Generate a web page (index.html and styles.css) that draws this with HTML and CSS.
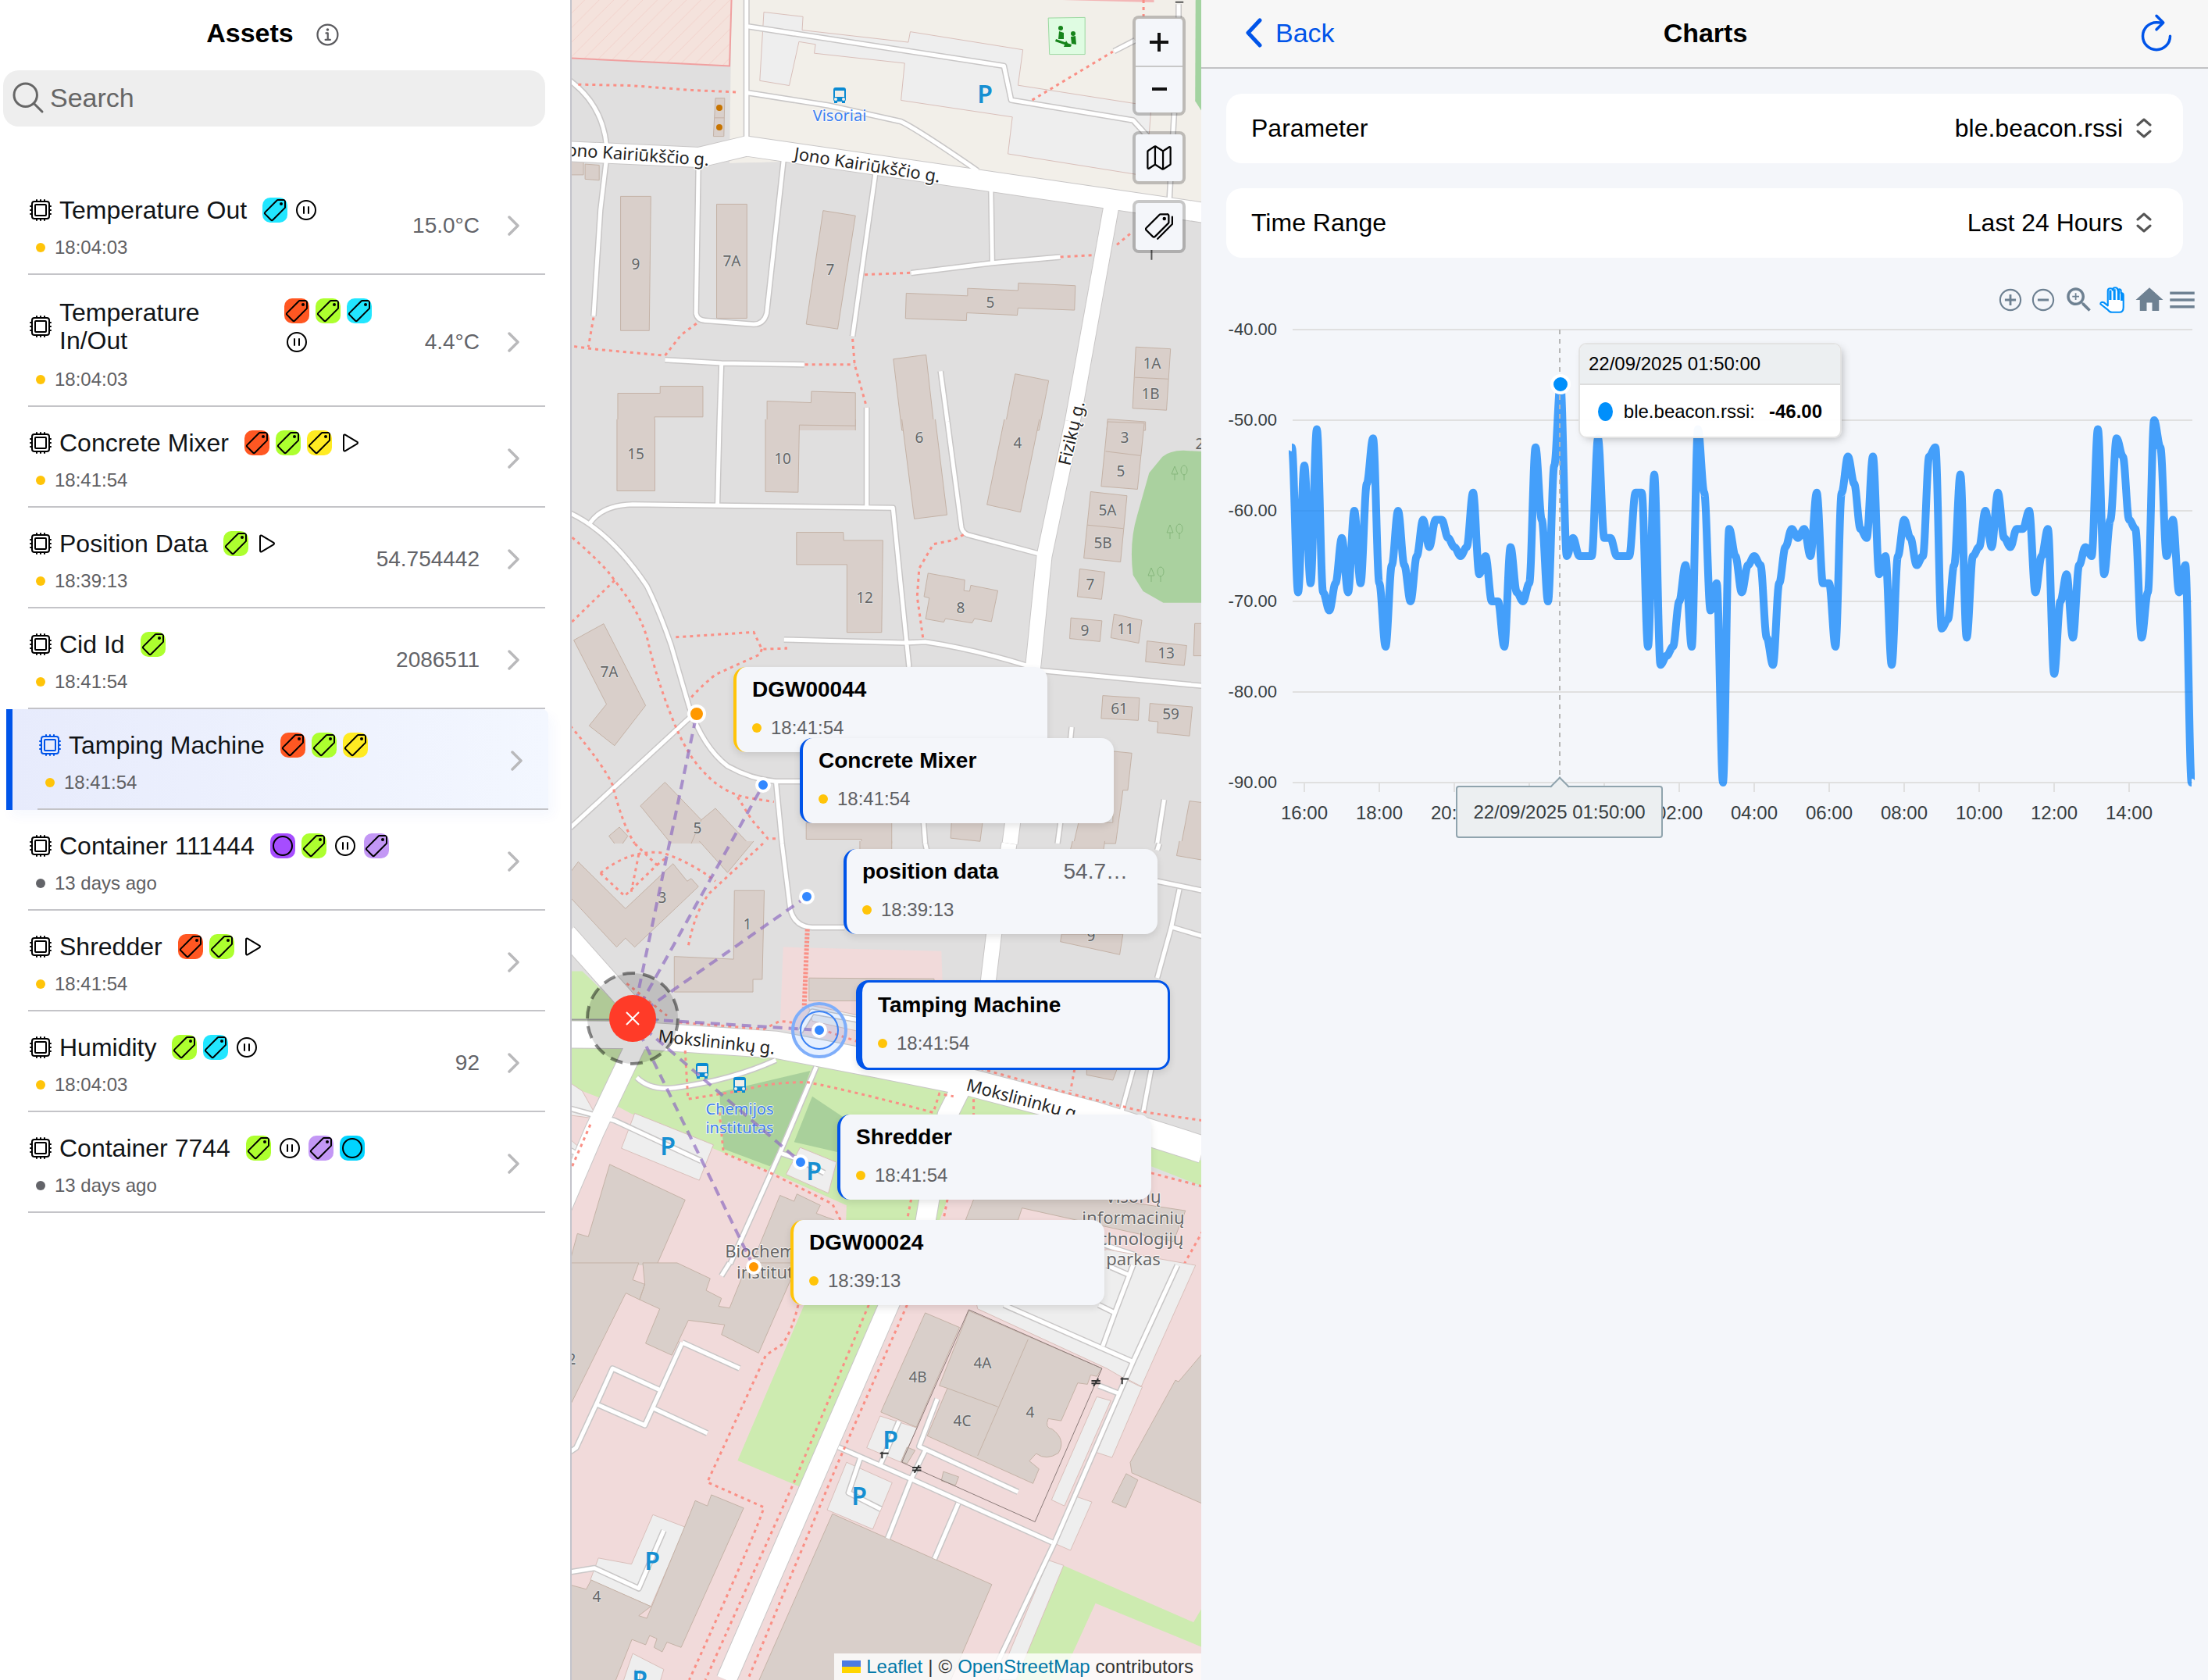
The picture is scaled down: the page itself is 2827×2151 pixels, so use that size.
FILE: index.html
```html
<!DOCTYPE html>
<html lang="en">
<head>
<meta charset="utf-8">
<title>Assets</title>
<meta name="viewport" content="width=device-width, initial-scale=1">
<link rel="stylesheet" href="styles.css">
</head>
<body>
<svg class="sprite" aria-hidden="true">
  <symbol id="i-chip" viewBox="0 0 512 512"><g fill="none" stroke="currentColor" stroke-width="32" stroke-linejoin="round" stroke-linecap="round"><rect x="80" y="80" width="352" height="352" rx="48"/><rect x="144" y="144" width="224" height="224" rx="16"/><path d="M256 80V48M336 80V48M176 80V48M256 464v-32M336 464v-32M176 464v-32M432 256h32M432 336h32M432 176h32M48 256h32M48 336h32M48 176h32"/></g></symbol>
  <symbol id="i-tag" viewBox="0 0 512 512"><path fill="none" stroke="currentColor" stroke-width="32" stroke-linejoin="round" d="M435.25 48h-122.9a14.46 14.46 0 00-10.2 4.2L56.45 297.9a28.85 28.85 0 000 40.7l117 117a28.85 28.85 0 0040.7 0L459.75 210a14.46 14.46 0 004.2-10.2v-123a28.66 28.66 0 00-28.7-28.8z"/><circle cx="384" cy="128" r="32" fill="currentColor"/></symbol>
  <symbol id="i-tags" viewBox="0 0 512 512"><g fill="none" stroke="currentColor" stroke-width="32" stroke-linejoin="round" stroke-linecap="round"><path d="M403.29 32H280.36a14.46 14.46 0 00-10.2 4.2L24.4 281.9a28.85 28.85 0 000 40.7l117 117a28.86 28.86 0 0040.71 0L427.8 194a14.46 14.46 0 004.2-10.2v-123A28.66 28.66 0 00403.29 32z"/><path d="M230 480l262-262a13.81 13.81 0 004-10V80"/></g><circle cx="352" cy="112" r="32" fill="currentColor"/></symbol>
  <symbol id="i-map" viewBox="0 0 512 512"><path fill="none" stroke="currentColor" stroke-width="32" stroke-linejoin="round" stroke-linecap="round" d="M313.27 124.64L198.73 51.36a32 32 0 00-29.28.35L56.51 127.49A16 16 0 0048 141.63v295.8a16 16 0 0023.49 14.14l97.82-63.79a32 32 0 0129.5-.24l111.86 73a32 32 0 0029.27-.11l115.43-75.94a16 16 0 008.63-14.2V74.57a16 16 0 00-23.49-14.14l-98 63.86a32 32 0 01-29.24.35zM328 128v336M184 48v336"/></symbol>
  <symbol id="i-pause" viewBox="0 0 512 512"><g fill="none" stroke="currentColor" stroke-width="32" stroke-linecap="round"><circle cx="256" cy="256" r="192"/><path d="M208 192v128M304 192v128"/></g></symbol>
  <symbol id="i-play" viewBox="0 0 512 512"><path fill="none" stroke="currentColor" stroke-width="32" d="M112 111v290c0 17.44 17 28.52 31 20.16l247.9-148.37c12.12-7.25 12.12-26.33 0-33.58L143 90.84c-14-8.36-31 2.72-31 20.16z"/></symbol>
  <symbol id="i-ring" viewBox="0 0 512 512"><circle cx="256" cy="256" r="192" fill="none" stroke="currentColor" stroke-width="32"/></symbol>
  <symbol id="i-info" viewBox="0 0 512 512"><g fill="none" stroke="currentColor" stroke-width="32" stroke-linecap="round" stroke-linejoin="round"><circle cx="248" cy="248" r="184"/><path d="M220 220h32v116M208 340h88"/></g><circle cx="248" cy="156" r="26" fill="currentColor"/></symbol>
  <symbol id="i-search" viewBox="0 0 512 512"><g fill="none" stroke="currentColor" stroke-width="32" stroke-linecap="round"><circle cx="221" cy="221" r="157"/><path d="M338.29 338.29L448 448"/></g></symbol>
  <symbol id="i-refresh" viewBox="0 0 512 512"><g fill="none" stroke="currentColor" stroke-width="32" stroke-linecap="round" stroke-linejoin="round"><path d="M320 146s24.36-12-64-12a160 160 0 10160 160"/><path d="M256 58l80 80-80 80"/></g></symbol>
  <symbol id="i-forward" viewBox="0 0 16 28"><path fill="none" stroke="currentColor" stroke-width="3.500" stroke-linecap="round" stroke-linejoin="round" d="M2 3l11 11L2 25"/></symbol>
  <symbol id="i-back" viewBox="0 0 22 38"><path fill="none" stroke="currentColor" stroke-width="5" stroke-linecap="round" stroke-linejoin="round" d="M19 3L4 19l15 16"/></symbol>
  <symbol id="i-expand" viewBox="0 0 20 26"><path fill="none" stroke="currentColor" stroke-width="3" stroke-linecap="round" stroke-linejoin="round" d="M2 9l8-7 8 7M2 17l8 7 8-7"/></symbol>
</svg>

<div class="app">
  <aside class="sidebar">
    <header class="sidebar-head">
      <h1 class="title">Assets</h1>
      <button class="icon-btn info-btn" type="button" aria-label="Information"><svg class="info-icon"><use href="#i-info"/></svg></button>
    </header>
    <label class="search">
      <svg class="search-icon"><use href="#i-search"/></svg>
      <input class="search-input" type="search" placeholder="Search" aria-label="Search">
    </label>
    <ul class="assets">
      <li><a class="asset" href="#">
        <span class="asset-main"><span class="asset-line"><svg class="chip"><use href="#i-chip"/></svg><span class="asset-name">Temperature Out</span><span class="badges"><svg class="badge cyan"><use href="#i-tag"/></svg><svg class="badge"><use href="#i-pause"/></svg></span></span>
        <span class="stamp"><i class="dot"></i>18:04:03</span></span>
        <span class="asset-value">15.0°C</span><svg class="forward"><use href="#i-forward"/></svg></a></li>
      <li><a class="asset" href="#">
        <span class="asset-main"><span class="asset-line"><svg class="chip"><use href="#i-chip"/></svg><span class="asset-name">Temperature In/Out</span><span class="badges"><svg class="badge red"><use href="#i-tag"/></svg><svg class="badge lime"><use href="#i-tag"/></svg><svg class="badge cyan"><use href="#i-tag"/></svg><svg class="badge"><use href="#i-pause"/></svg></span></span>
        <span class="stamp"><i class="dot"></i>18:04:03</span></span>
        <span class="asset-value">4.4°C</span><svg class="forward"><use href="#i-forward"/></svg></a></li>
      <li><a class="asset" href="#">
        <span class="asset-main"><span class="asset-line"><svg class="chip"><use href="#i-chip"/></svg><span class="asset-name">Concrete Mixer</span><span class="badges"><svg class="badge red"><use href="#i-tag"/></svg><svg class="badge lime"><use href="#i-tag"/></svg><svg class="badge yellow"><use href="#i-tag"/></svg><svg class="badge"><use href="#i-play"/></svg></span></span>
        <span class="stamp"><i class="dot"></i>18:41:54</span></span>
        <svg class="forward"><use href="#i-forward"/></svg></a></li>
      <li><a class="asset" href="#">
        <span class="asset-main"><span class="asset-line"><svg class="chip"><use href="#i-chip"/></svg><span class="asset-name">Position Data</span><span class="badges"><svg class="badge lime"><use href="#i-tag"/></svg><svg class="badge"><use href="#i-play"/></svg></span></span>
        <span class="stamp"><i class="dot"></i>18:39:13</span></span>
        <span class="asset-value">54.754442</span><svg class="forward"><use href="#i-forward"/></svg></a></li>
      <li><a class="asset" href="#">
        <span class="asset-main"><span class="asset-line"><svg class="chip"><use href="#i-chip"/></svg><span class="asset-name">Cid Id</span><span class="badges"><svg class="badge lime"><use href="#i-tag"/></svg></span></span>
        <span class="stamp"><i class="dot"></i>18:41:54</span></span>
        <span class="asset-value">2086511</span><svg class="forward"><use href="#i-forward"/></svg></a></li>
      <li><a class="asset selected" href="#" aria-current="true">
        <span class="asset-main"><span class="asset-line"><svg class="chip"><use href="#i-chip"/></svg><span class="asset-name">Tamping Machine</span><span class="badges"><svg class="badge red"><use href="#i-tag"/></svg><svg class="badge lime"><use href="#i-tag"/></svg><svg class="badge yellow"><use href="#i-tag"/></svg></span></span>
        <span class="stamp"><i class="dot"></i>18:41:54</span></span>
        <svg class="forward"><use href="#i-forward"/></svg></a></li>
      <li><a class="asset" href="#">
        <span class="asset-main"><span class="asset-line"><svg class="chip"><use href="#i-chip"/></svg><span class="asset-name">Container 111444</span><span class="badges"><svg class="badge purple"><use href="#i-ring"/></svg><svg class="badge lime"><use href="#i-tag"/></svg><svg class="badge"><use href="#i-pause"/></svg><svg class="badge lilac"><use href="#i-tag"/></svg></span></span>
        <span class="stamp"><i class="dot stale"></i>13 days ago</span></span>
        <svg class="forward"><use href="#i-forward"/></svg></a></li>
      <li><a class="asset" href="#">
        <span class="asset-main"><span class="asset-line"><svg class="chip"><use href="#i-chip"/></svg><span class="asset-name">Shredder</span><span class="badges"><svg class="badge red"><use href="#i-tag"/></svg><svg class="badge lime"><use href="#i-tag"/></svg><svg class="badge"><use href="#i-play"/></svg></span></span>
        <span class="stamp"><i class="dot"></i>18:41:54</span></span>
        <svg class="forward"><use href="#i-forward"/></svg></a></li>
      <li><a class="asset" href="#">
        <span class="asset-main"><span class="asset-line"><svg class="chip"><use href="#i-chip"/></svg><span class="asset-name">Humidity</span><span class="badges"><svg class="badge lime"><use href="#i-tag"/></svg><svg class="badge cyan"><use href="#i-tag"/></svg><svg class="badge"><use href="#i-pause"/></svg></span></span>
        <span class="stamp"><i class="dot"></i>18:04:03</span></span>
        <span class="asset-value">92</span><svg class="forward"><use href="#i-forward"/></svg></a></li>
      <li><a class="asset" href="#">
        <span class="asset-main"><span class="asset-line"><svg class="chip"><use href="#i-chip"/></svg><span class="asset-name">Container 7744</span><span class="badges"><svg class="badge lime"><use href="#i-tag"/></svg><svg class="badge"><use href="#i-pause"/></svg><svg class="badge lilac"><use href="#i-tag"/></svg><svg class="badge sky"><use href="#i-ring"/></svg></span></span>
        <span class="stamp"><i class="dot stale"></i>13 days ago</span></span>
        <svg class="forward"><use href="#i-forward"/></svg></a></li>
    </ul>
  </aside>

  <main class="map">
    <svg class="map-canvas" viewBox="732 0 806 2151" preserveAspectRatio="xMinYMin slice" role="img" aria-label="Street map">
      <defs>
        <pattern id="hatch" width="36" height="54" patternUnits="userSpaceOnUse"><path d="M-4 60L40 -6M-22 33L14 -21M14 87L50 33" stroke="#f0b9b4" stroke-width="1" fill="none"/></pattern>
        <g id="bus"><rect x="-8" y="-10" width="16" height="18" rx="3" fill="#0a8ad2"/><rect x="-6" y="-6" width="12" height="8" fill="#f2efe9"/><circle cx="-5" cy="5" r="2" fill="#f2efe9"/><circle cx="5" cy="5" r="2" fill="#f2efe9"/><path d="M-7 7h4v3h-4zM3 7h4v3h-4z" fill="#0a8ad2"/></g>
        <g id="trees" fill="none" stroke="#86b77c" stroke-width="1"><path d="M-6 10V2M6 10V2M-6 -8l4 10h-8z"/><ellipse cx="6" cy="-3" rx="4" ry="6"/></g>
      </defs>
      <rect x="732" width="806" height="2151" fill="#e0dfdf"/>

      <!-- tile row 1 -->
      <g transform="translate(730 0) scale(.5166 .3444)">
        <path class="cream" d="M400 0H1568V830L1320 787L530 602L395 607Z"/>
        <path class="res-strip" d="M0 215H395V607L530 602L1320 765L1568 815V1568H0Z"/>
        <path fill="#f4e2dc" d="M0 0H400L395 245L0 215Z"/><path fill="url(#hatch)" stroke="#f0a0a0" stroke-width="2" d="M-10 -10H400L395 245L-10 215Z"/>
        <path fill="#f3b6b6" d="M1220 0H1447V9L1220 0Z"/>
        <path fill="#a3d3a0" d="M1550 0H1568V420L1549 375Z"/>
        <path class="parking" d="M480 45L577 62L575 112L838 157L843 118L1122 185L1110 317L1400 385L1440 395L1435 500L1410 650L1085 572L1096 435L820 373L829 235L605 198L608 165L567 155L543 318L470 300Z"/>
        <path fill="#dffce2" stroke="#9bd8a0" stroke-width="1" d="M1185 67L1276 65V202H1188Z"/>
        <path class="building" d="M125 730H200L196 1229H125ZM363 759H438V1183H363ZM627 783L707 802L663 1223L585 1205ZM833 1090L985 1100V1072L1110 1080L1111 1052L1252 1062L1250 1153L1110 1145L1108 1172L983 1163L982 1192L831 1184ZM360 365H383L381 507H355ZM358 438H382M-9 592L33 594V650H-9ZM37 610L72 614V670L37 666ZM1402 1290L1488 1297L1478 1525L1394 1518ZM1400 1403L1482 1409M801 1335L882 1319L903 1600H822ZM1103 1390L1186 1415L1162 1600H1076ZM1332 1558L1426 1568V1600H1330Z"/>
        <path class="building" d="M118 1600V1462H223V1436H329V1550H209V1600M488 1600V1491L597 1497L598 1455L707 1460V1600"/>
        <path id="t1minor" class="w-minor" d="M437 -9V520M440 98L1075 245L1093 372L1395 447L1430 505M440 345L640 392L820 452Q860 480 1010 635M0 300Q80 390 90 540M90 590L75 780L58 1175M318 600L312 1165Q315 1190 335 1192L455 1206Q480 1205 487 1165L530 580M757 640L700 1250M1043 695L1046 975M845 1015L1046 978L1215 955M235 1338L375 1350L580 1355M375 1350L370 1568M735 1515V1568M918 1380L935 1568M1497 420L1485 745M1508 15V65M1348 190L1400 150"/>
        <use href="#t1minor" class="casing"/>
        <path id="t1jono" class="w-jono" d="M0 563L320 585L437 543L1340 740L1568 790"/>
        <path id="t1fiz" class="w-fiz" d="M1345 735L1245 1568"/>
        <use href="#t1jono" class="casing big"/><use href="#t1fiz" class="casing mid"/>
        <use href="#t1minor" class="road"/><use href="#t1jono" class="road big"/><use href="#t1fiz" class="road mid"/>
        <path class="foot" d="M20 314L150 318L300 335L420 343M58 1180L45 1290M10 1288L60 1298L235 1322L275 1245L320 1195M730 1021L845 1014M1215 955L1300 948M1355 910L1395 860M700 1260L705 1355L735 1515M582 1355H705M1145 372L1345 192M1421 0V60"/>
        <path d="M1441 925V966M1500 8H1520" stroke="#555" stroke-width="2"/>
      </g>

      <!-- tile row 2 -->
      <g transform="translate(730 540) scale(.5166 .3444)">
        <path fill="#aad19f" d="M1580 112L1520 107Q1485 108 1468 130L1435 190L1405 350Q1385 450 1395 570L1420 630L1470 673H1580Z"/>
        <path class="building" d="M116 -9V257H210V-9M484 -9V260L565 262L568 12L707 15V-9M822 -9L853 361L934 346L905 -9M1076 -9L1033 308L1116 336L1163 -9"/>
        <path class="building" d="M1332 0L1423 5L1406 251L1316 240ZM1327 110L1414 126M1290 260L1380 275L1364 521L1273 507ZM1282 384L1371 397M561 411H677L678 441H775L772 783H686V531H561ZM887 563L978 588L976 628L990 630L993 608L1060 628L1044 743L1002 732L996 748L930 732L926 745L881 733L890 655L877 650ZM1263 547L1325 559L1317 660L1257 650ZM1241 729L1318 740L1313 817L1238 806ZM1348 715L1417 738L1409 823L1340 803ZM1430 815L1528 832L1522 906L1426 892ZM1548 750H1580V870H1545ZM1320 1018L1411 1027L1408 1110L1316 1103ZM1437 1047L1542 1060L1535 1168L1455 1156L1457 1115L1434 1112ZM83 751L187 1055L110 1204L47 1130L90 1050L9 812Z"/>
        <path class="building" d="M250 1568L174 1428L235 1340L325 1480L360 1437L442 1568M300 1568L325 1480M110 1568L96 1540L122 1507L143 1540L130 1568M1345 1225L1392 1232L1382 1370H1370L1352 1568H1248L1260 1490H1345ZM585 1491H797V1568H722V1552H585ZM945 1491H1022L1016 1560L943 1548ZM1515 1568L1525 1490L1535 1410L1580 1418V1568"/>
        <path id="t2minor" class="w-minor" d="M370 0L365 310M735 0V315M935 0L970 395Q973 412 985 420L1160 490M50 375Q80 310 155 307L800 320L840 912M0 340Q100 410 190 610Q220 700 250 830L295 1060Q330 1210 390 1280Q450 1330 510 1337H570M510 1337L525 1568M0 1510L300 1095M530 810L830 822L880 818Q1000 845 1135 908M1165 925L1568 982M1243 1135L1240 1180M1472 1405L1455 1568M876 1491L880 1568M1215 1491L1208 1568"/>
        <path id="t2fiz" class="w-fiz" d="M1245 0L1175 500L1148 900L1090 1568"/>
        <use href="#t2minor" class="casing"/><use href="#t2fiz" class="casing mid"/>
        <use href="#t2minor" class="road"/><use href="#t2fiz" class="road mid"/>
        <path class="foot" d="M5 430Q90 540 110 590Q180 720 195 830Q215 960 255 1110Q290 1240 330 1300Q370 1370 430 1395L505 1413M110 590L0 750M262 801L455 782L475 845L535 843V825M475 845L470 865L360 940Q320 990 300 1025M975 420L950 440L900 455L865 545L860 650L875 810M0 1130Q80 1270 105 1350Q130 1500 160 1568M415 1395L450 1480L490 1550H510"/>
      </g>

      <!-- tile row 3 -->
      <g transform="translate(730 1080) scale(.5166 .3444)">
        <path class="grass" d="M0 475H30L110 590V740H0Z"/>
        <path class="commercial" d="M528 385L920 400L928 740L740 760L520 690Z"/>
        <path class="grass" d="M0 760H290L510 800L1000 930L1568 1180V1275L1440 1200L1350 1568H0Z"/>
        <path class="commercial" d="M0 903L90 955L150 1003L380 1150L490 1215L685 1345L680 1568H0ZM935 1323L1440 1215L1568 1285V1580H870Z"/>
        <path class="wood" d="M370 925L595 845L530 1130L495 1200L380 1135ZM600 940L700 1040V1160L555 1110Z"/>
        <path class="parking" d="M160 1003L355 1120L320 1252L127 1133ZM570 1130L660 1185L640 1300L535 1230ZM0 890L30 920L60 1000L50 1020L0 1010ZM0 1100L30 1140L0 1230ZM590 600L720 640V700L600 660Z"/>
        <path class="building" d="M20 68L137 242L255 75L290 140L300 130L318 160L160 385L137 352L115 385L0 200V108ZM320 -9L390 108L455 -9M407 175H481L476 505H453V552H258V420L405 430ZM592 500L902 503V585H592ZM718 -9V22H797V-9M1245 -9L1240 22H1322L1325 -9M1510 -9L1503 45L1580 65V-9M1218 337H1370L1362 413L1215 365ZM1280 840H1355L1345 880L1280 860Z"/>
        <path class="building" d="M98 1193L285 1325L205 1600H-9L18 1450L45 1462ZM520 1308L555 1330L562 1303L620 1345L610 1375L655 1400L600 1600H440ZM1000 1323H1340L1525 1365L1495 1480L1120 1355L1110 1400H980Z"/>
        <path id="t3minor" class="w-minor" d="M525 0L545 240Q555 310 600 312H680M165 870Q200 920 260 908Q400 880 510 805M610 830L520 1150L395 1568M520 1150L560 1170M0 985L110 1030L325 1180M0 1140L25 1160M710 655L600 625L570 700M1455 140L1568 175M1510 170L1490 310L1455 500M1490 310L1568 345M1395 840L1365 1005M1440 840L1420 1000M1460 0L1455 25M880 0L884 25M560 1170L630 1225M1300 1480L1400 1530"/>
        <path id="t3mok" class="w-mok" d="M0 710L156 712L510 748L760 820L1000 892L1300 1010L1568 1138"/>
        <path id="t3side" class="w-side" d="M-9 335L160 620M165 740L60 1070L-20 1350M975 890L935 1010L890 1323L862 1568"/>
        <path id="t3fiz" class="w-fiz" d="M1088 0L1050 340L1010 840"/>
        <use href="#t3minor" class="casing"/><use href="#t3mok" class="casing huge"/><use href="#t3side" class="casing big"/><use href="#t3fiz" class="casing mid"/>
        <use href="#t3minor" class="road"/><use href="#t3mok" class="road huge"/><use href="#t3side" class="road big"/><use href="#t3fiz" class="road mid"/>
        <path class="foot" d="M478 0L345 185Q310 250 293 380M75 110Q150 20 230 35Q300 70 360 140M75 110L135 195L215 80L160 0M170 40L150 190M215 80L240 50M270 665L480 690L520 660L550 665M285 770L292 950L420 920Q500 885 590 888Q700 920 900 1000L915 930L950 940M370 1000L380 1150L490 1220L650 1340L670 1400M1000 950V1008M140 520L240 640M640 700L720 740M1000 830L1240 930L1430 1000L1568 1030M1250 840L1240 920M50 1045L5 1200M1440 1225L1568 1275M845 1323L835 1400M935 1323L925 1400M1568 1440L1520 1568"/>
        <path class="steps" d="M588 318L580 610"/>
        <path d="M0 655H220" stroke="#999" stroke-width="2"/>
      </g>

      <!-- tile row 4 -->
      <g transform="translate(730 1620) scale(.5166 .3386)">
        <path class="commercial" d="M0 0H1568V1568H0Z"/>
        <path class="grass" d="M565 0H800L765 150L570 838L415 738L580 150ZM1222 1135L1545 1350L1568 1290V1445L1302 1278L1215 1568H1105Z"/>
        <path class="parking" d="M1000 100L1330 -60L1550 0L1415 460L1375 430L1330 390L1010 165ZM1305 497L1340 512L1225 910L1193 887ZM1380 430L1418 460L1343 727L1305 708ZM1255 875L1293 895L1240 1078L1198 1050ZM1185 1115L1223 1135L1105 1568H1060ZM768 570L860 615L820 745L735 690ZM685 745L798 822L750 998L637 925ZM205 943L285 990L200 1290L50 1190L70 1107L152 1130ZM155 1468L232 1528L222 1580H130Z"/>
        <path class="building" d="M-9 -9H170L155 55L185 72L172 130L138 105L0 530H-9ZM180 -9H265L347 50L337 95L375 125L368 155L395 162L440 -9H560L545 60L467 332L375 262L383 225L293 208L252 340L187 295L222 165L172 130L185 72ZM350 868L430 918L275 1445L240 1425L228 1462L208 1445L215 1412L197 1400L187 1435L153 1415L110 1580H-9V1205L40 1225L52 1190L200 1290L170 1325L190 1335L297 940L310 890L340 910ZM650 940L1045 1207L940 1580H465ZM880 180L965 235L858 612L770 555ZM988 172L1318 390L1305 420L1290 415L1282 450L1258 445L1217 588L1185 580Q1175 615 1195 620Q1230 660 1210 710Q1180 740 1155 712L1138 740L1162 770L1147 825L885 645L935 465L915 455ZM1135 280L1010 720M935 465L1060 535M1580 310L1508 440L1500 435L1388 745L1392 785L1580 910ZM1378 788L1407 812L1377 917L1343 895ZM925 780L963 800L955 832L920 815ZM835 688L855 700L835 750L820 742Z"/>
        <path fill="none" stroke="#8a7a78" stroke-width="1" d="M988 168L822 745L1152 970L1318 390Z"/>
        <path id="t4minor" class="w-minor" d="M278 292L420 390M278 292L185 605L65 525L105 390L220 470M205 540L340 635M65 525L15 690L0 705M665 688L845 808L1195 1048M1060 1500L1200 1050L1395 365L1505 0M1395 365L1075 150M1320 305L1350 180L1395 0M1350 180L1310 150M1390 40L1330 0M1310 455L1360 485M910 505L865 685L1110 857M880 700L845 808L787 1033M962 900L903 1110M720 725L690 860L770 922M815 590L770 750M0 1160L60 1145L170 1222L232 1003M165 1568L168 1530M395 -9L375 40"/>
        <path id="t4side" class="w-side" d="M832 0L790 150L387 1568"/>
        <use href="#t4minor" class="casing"/><use href="#t4side" class="casing big"/>
        <use href="#t4minor" class="road"/><use href="#t4side" class="road big"/>
        <path class="foot" d="M565 150Q550 250 525 300L485 340L340 820L480 915Q470 980 295 1568M740 150L555 820L335 1568M835 150L660 760L440 1568"/>
        <path d="M1292 437H1314M1292 447H1314M1309 428L1297 457M848 765H870M848 775H870M865 756L853 785M1368 424V450M1364 430H1384M773 705V730M768 711H789" stroke="#333" stroke-width="2"/>
      </g>

      <g fill="#c77400"><circle cx="921" cy="138" r="4"/><circle cx="921" cy="163" r="4"/></g>
      <g fill="#16841b"><circle cx="1358" cy="36" r="3"/><path d="M1356 40l6 2v8h-7zM1352 50l20 7-1 3-20-7zM1365 52l5 8h-8z"/><circle cx="1374" cy="43" r="3"/><path d="M1371 47l6-1 1 11-6-1z"/></g>
      <use href="#trees" x="1510" y="605"/><use href="#trees" x="1504" y="680"/><use href="#trees" x="1480" y="735"/>
      <use href="#bus" x="1075" y="122"/><use href="#bus" x="899" y="1371"/><use href="#bus" x="947" y="1389"/>

      <g class="p-mark">
        <text x="1261" y="132">P</text><text x="855" y="1479">P</text><text x="1042" y="1511">P</text><text x="1140" y="1855">P</text><text x="1100" y="1927">P</text><text x="835" y="2010">P</text><text x="819" y="2162">P</text>
      </g>
      <g class="stop">
        <text x="1075" y="155">Visoriai</text><text x="947" y="1427">Chemijos</text><text x="947" y="1451">institutas</text>
      </g>
      <g class="house">
        <text x="814" y="345">9</text><text x="937" y="341">7A</text><text x="1063" y="352">7</text><text x="1268" y="394">5</text><text x="1475" y="472">1A</text><text x="1473" y="511">1B</text>
        <text x="814" y="588">15</text><text x="1002" y="594">10</text><text x="1177" y="567">6</text><text x="1303" y="574">4</text><text x="1440" y="567">3</text><text x="1435" y="610">5</text><text x="1418" y="660">5A</text><text x="1412" y="702">5B</text><text x="1107" y="772">12</text><text x="1230" y="785">8</text><text x="1396" y="755">7</text><text x="1389" y="814">9</text><text x="1441" y="812">11</text><text x="1493" y="843">13</text><text x="780" y="867">7A</text><text x="1433" y="914">61</text><text x="1499" y="921">59</text><text x="893" y="1067">5</text><text x="1536" y="575">2</text>
        <text x="848" y="1156">3</text><text x="957" y="1190">1</text><text x="1397" y="1205">9</text>
        <text x="1175" y="1770">4B</text><text x="1258" y="1752">4A</text><text x="1232" y="1826">4C</text><text x="1319" y="1815">4</text><text x="764" y="2051">4</text><text x="732" y="1747">2</text>
      </g>
      <g class="place">
        <text x="991" y="1610">Biochemijos</text><text x="991" y="1637">institutas</text>
        <text x="1451" y="1540">Visorių</text><text x="1451" y="1567">informacinių</text><text x="1451" y="1594">technologijų</text><text x="1451" y="1620">parkas</text>
      </g>
      <g class="street">
        <text transform="translate(719 199) rotate(4)">Jono Kairiūkščio g.</text>
        <text transform="translate(1016 204) rotate(9)">Jono Kairiūkščio g.</text>
        <text transform="translate(1370 597) rotate(-77)">Fizikų g.</text>
        <text transform="translate(842 1334) rotate(6)">Mokslininkų g.</text>
        <text transform="translate(1236 1396) rotate(15)">Mokslininkų g.</text>
      </g>

      <!-- gateway links and markers -->
      <circle cx="810" cy="1304" r="58" class="range"/>
      <path class="link" d="M810 1304L892 914M810 1304L977 1005M810 1304L1033 1148M810 1304L1049 1319M810 1304L1025 1488M810 1304L965 1622"/>
      <circle cx="810" cy="1304" r="30" fill="#ff3b28"/>
      <path d="M802 1296l16 16m0-16l-16 16" stroke="#fff" stroke-width="2"/>
      <circle cx="1049" cy="1319" r="34" class="ring-outer"/><circle cx="1049" cy="1319" r="24" class="ring-inner"/>
      <g class="marker gateway"><circle cx="892" cy="914" r="10"/><circle cx="965" cy="1622" r="8"/></g>
      <g class="marker beacon"><circle cx="977" cy="1005" r="8"/><circle cx="1033" cy="1148" r="8"/><circle cx="1049" cy="1319" r="8"/><circle cx="1025" cy="1488" r="8"/></g>
    </svg>

    <article class="pin pin-dgw44 gateway-pin"><header class="pin-head"><h2>DGW00044</h2></header><p class="stamp"><i class="dot"></i>18:41:54</p></article>
    <article class="pin pin-mixer"><header class="pin-head"><h2>Concrete Mixer</h2></header><p class="stamp"><i class="dot"></i>18:41:54</p></article>
    <article class="pin pin-position"><header class="pin-head"><h2>position data</h2><span class="pin-value">54.7…</span></header><p class="stamp"><i class="dot"></i>18:39:13</p></article>
    <article class="pin pin-tamping active"><header class="pin-head"><h2>Tamping Machine</h2></header><p class="stamp"><i class="dot"></i>18:41:54</p></article>
    <article class="pin pin-shredder"><header class="pin-head"><h2>Shredder</h2></header><p class="stamp"><i class="dot"></i>18:41:54</p></article>
    <article class="pin pin-dgw24 gateway-pin"><header class="pin-head"><h2>DGW00024</h2></header><p class="stamp"><i class="dot"></i>18:39:13</p></article>

    <div class="controls">
      <div class="control">
        <button type="button" aria-label="Zoom in"><svg class="sign" viewBox="0 0 24 24"><path d="M12 0v24M0 12h24"/></svg></button>
        <button type="button" aria-label="Zoom out"><svg class="sign" viewBox="0 0 24 24"><path d="M3 11h19"/></svg></button>
      </div>
      <div class="control"><button type="button" aria-label="Map layers"><svg class="control-icon"><use href="#i-map"/></svg></button></div>
      <div class="control"><button type="button" aria-label="Tags"><svg class="control-icon"><use href="#i-tags"/></svg></button></div>
    </div>
    <footer class="credit"><svg class="flag" viewBox="0 0 24 16"><path fill="#4c7be1" d="M0 0h24v8H0z"/><path fill="#ffd500" d="M0 8h24v8H0z"/></svg><a href="#">Leaflet</a> <span>|</span> © <a href="#">OpenStreetMap</a> contributors</footer>
  </main>

  <section class="charts">
    <header class="charts-head">
      <button class="back" type="button"><svg class="back-icon"><use href="#i-back"/></svg>Back</button>
      <h2 class="title">Charts</h2>
      <button class="icon-btn refresh" type="button" aria-label="Refresh"><svg class="refresh-icon"><use href="#i-refresh"/></svg></button>
    </header>
    <form class="filters">
      <div class="field"><label for="parameter">Parameter</label><select id="parameter"><option>ble.beacon.rssi</option></select><svg class="expand"><use href="#i-expand"/></svg></div>
      <div class="field"><label for="range">Time Range</label><select id="range"><option>Last 24 Hours</option></select><svg class="expand"><use href="#i-expand"/></svg></div>
    </form>
    <div class="toolbar">
      <button type="button" aria-label="Zoom in"><svg class="tool-round" viewBox="0 0 24 24"><path d="M13 7h-2v4H7v2h4v4h2v-4h4v-2h-4V7zm-1-5C6.48 2 2 6.48 2 12s4.480 10 10 10 10-4.480 10-10S17.520 2 12 2zm0 18.500c-4.690 0-8.500-3.810-8.500-8.500S7.310 3.500 12 3.500 20.500 7.310 20.500 12 16.690 20.500 12 20.500z"/></svg></button>
      <button type="button" aria-label="Zoom out"><svg class="tool-round" viewBox="0 0 24 24"><path d="M7 11v2h10v-2H7zm5-9C6.480 2 2 6.480 2 12s4.480 10 10 10 10-4.480 10-10S17.520 2 12 2zm0 18.500c-4.690 0-8.500-3.810-8.500-8.500S7.310 3.500 12 3.500 20.500 7.310 20.500 12 16.690 20.500 12 20.500z"/></svg></button>
      <button type="button" aria-label="Selection zoom"><svg class="tool" viewBox="0 0 24 24"><path d="M15.500 14h-.79l-.28-.27C15.410 12.590 16 11.110 16 9.500 16 5.910 13.090 3 9.500 3S3 5.910 3 9.500 5.910 16 9.500 16c1.610 0 3.090-.59 4.230-1.570l.27.28v.79l5 4.990L20.490 19l-4.990-5zm-6 0C7.010 14 5 11.990 5 9.500S7.010 5 9.500 5 14 7.010 14 9.500 11.990 14 9.500 14zM12 10h-2v2H9v-2H7V9h2V7h1v2h2v1z"/></svg></button>
      <button type="button" class="pan" aria-label="Panning" aria-pressed="true"><svg class="tool" viewBox="0 0 40 40"><path d="M15 23V9q0-3 3-3t3 2q0-3 3-3t3 3q2-2 4 0v4q3-1 3 2v15q0 6-5 6H20q-3 0-5-3L6 25q0-3 4-2l5 4z" fill="#fff" stroke="#008ffb" stroke-width="2" stroke-linejoin="round"/><path d="M18 8v12M23 7v13M28 8v12M32 12v9" stroke="#008ffb" stroke-width="3" fill="none"/></svg></button>
      <button type="button" aria-label="Reset zoom"><svg class="tool" viewBox="0 0 24 24"><path d="M10 20v-6h4v6h5v-8h3L12 3 2 12h3v8z"/></svg></button>
      <button type="button" aria-label="Menu"><svg class="tool" viewBox="0 0 24 24"><path d="M3 18h18v-2H3v2zm0-5h18v-2H3v2zm0-7v2h18V6H3z"/></svg></button>
    </div>
    <div class="plot">
      <svg class="plot-svg" viewBox="0 0 1289 680" role="img" aria-label="ble.beacon.rssi over the last 24 hours">
        <defs><clipPath id="plot-clip"><rect x="112" y="0" width="1160" height="604"/></clipPath></defs>
        <g class="grid"><path d="M117 18H1269M117 134H1269M117 250H1269M117 366H1269M117 482H1269M117 598H1269"/><path id="ticks"/></g>
        <g class="y-labels"><text x="97" y="25">-40.00</text><text x="97" y="141">-50.00</text><text x="97" y="257">-60.00</text><text x="97" y="373">-70.00</text><text x="97" y="489">-80.00</text><text x="97" y="605">-90.00</text></g>
        <g class="x-labels"><text x="132" y="645">16:00</text><text x="228" y="645">18:00</text><text x="324" y="645">20:00</text><text x="612" y="645">02:00</text><text x="708" y="645">04:00</text><text x="804" y="645">06:00</text><text x="900" y="645">08:00</text><text x="996" y="645">10:00</text><text x="1092" y="645">12:00</text><text x="1188" y="645">14:00</text></g>
        <path id="series" class="series" clip-path="url(#plot-clip)"/>
        <path class="crosshair" d="M459 18V592"/>
        <circle class="point" cx="460" cy="88" r="11"/>
      </svg>
      <div class="tooltip"><div class="tooltip-title">22/09/2025 01:50:00</div><div class="tooltip-body"><i class="tooltip-dot"></i><span>ble.beacon.rssi:</span><b>-46.00</b></div></div>
      <div class="x-tooltip">22/09/2025 01:50:00</div>
    </div>
  </section>
</div>
<script src="chart.js"></script>
</body>
</html>
```

FILE: styles.css
```css
* { box-sizing: border-box; }

body {
  margin: 0;
  font-family: "Liberation Sans", Arial, sans-serif;
  color: #000;
  background: #fff;
}

h1, h2, p, ul { margin: 0; padding: 0; }
ul { list-style: none; }
button { font: inherit; border: 0; padding: 0; background: none; cursor: pointer; }
svg { display: block; flex: none; }
.sprite { position: absolute; width: 0; height: 0; }

.app {
  display: grid;
  grid-template-columns: minmax(0, 732fr) minmax(0, 806fr) minmax(0, 1289fr);
  min-height: 100vh;
}

.title { font-size: 34px; line-height: 40px; font-weight: 700; }

/* Sidebar */
.sidebar { border-right: 2px solid #c3c3cb; background: #fff; }
.sidebar-head {
  display: flex;
  align-items: center;
  justify-content: center;
  gap: 26px;
  height: 90px;
  padding: 0 28px 6px 0;
}
.icon-btn { display: flex; }
.info-btn { color: #5b5b5f; padding-top: 6px; }
.info-icon { width: 36px; height: 36px; }

.search {
  display: flex;
  align-items: center;
  height: 72px;
  margin: 0 32px 0 4px;
  padding: 0 10px 2px 8px;
  border-radius: 20px;
  background: #eee;
  color: #666;
}
.search-icon { width: 48px; height: 48px; }
.search-input {
  flex: 1;
  min-width: 0;
  border: 0;
  padding: 0 4px;
  background: none;
  outline: none;
  font: inherit;
  font-size: 34px;
  color: #000;
}
.search-input::placeholder { color: #666; opacity: 1; }

.assets { margin: 61px 32px 0 4px; }
.asset {
  position: relative;
  display: flex;
  align-items: center;
  padding: 2px 32px 0 32px;
  color: #111417;
  text-decoration: none;
}
.asset::after {
  content: "";
  position: absolute;
  left: 32px;
  right: 0;
  bottom: 0;
  height: 2px;
  background: #c4c4c8;
}
.asset-main { flex: 1; min-width: 0; padding: 24px 28px 21px 0; }
.asset-line { display: flex; align-items: center; gap: 8px; }
.chip { width: 32px; height: 32px; color: #000; }
.asset-name { font-size: 32px; line-height: 36px; margin-right: 8px; }
.badges { display: flex; flex-wrap: wrap; flex: 0 1 auto; color: #000; }
.badge { width: 32px; height: 32px; margin: 4px; border-radius: 10px; }
.red { background: #ff5722; }
.lime { background: #adff2f; }
.cyan { background: #22e6ff; }
.yellow { background: #ffeb22; }
.purple { background: #a64dff; }
.lilac { background: #c397f5; }
.sky { background: #00d4ff; }

.stamp {
  display: flex;
  align-items: center;
  gap: 12px;
  font-size: 24px;
  line-height: 28px;
  color: #5f6063;
}
.asset .stamp { margin-top: 14px; padding-left: 10px; }
.dot { width: 12px; height: 12px; border-radius: 50%; background: #ffc409; }
.dot.stale { background: #636469; }
.asset-value { font-size: 28px; line-height: 32px; color: #636469; }
.forward { width: 16px; height: 28px; margin-left: 36px; color: #b9b9bb; }

.selected {
  margin: 0 -4px 0 4px;
  border-left: 8px solid #0054e9;
  border-radius: 0 8px 0 0;
  background: linear-gradient(90deg, #e7ebfc, #f3f7ff);
  box-shadow: 6px 8px 16px rgba(0, 84, 233, .04);
}
.selected .chip { color: #0054e9; }

/* Map */
.map { position: relative; overflow: hidden; }
.map-canvas { position: absolute; width: 100%; height: 100%; }
.map-canvas path { vector-effect: non-scaling-stroke; }
.cream { fill: #f2efe9; }
.res-strip { fill: #e0dfdf; }
.grass { fill: #cdebb0; }
.wood { fill: #a9d09b; }
.commercial { fill: #f1dada; }
.parking { fill: #eee; stroke: #d9bfba; stroke-width: 1; }
.building { fill: #d9cfca; stroke: #c4b2a6; stroke-width: 1; }
.w-minor, .w-jono, .w-fiz, .w-mok, .w-side { fill: none; stroke-linejoin: round; }
.casing { stroke: #c8c6c6; stroke-width: 8px; }
.road { stroke: #fff; stroke-width: 5px; }
.casing.mid { stroke-width: 21px; }
.road.mid { stroke-width: 19px; }
.casing.big { stroke-width: 27px; }
.road.big { stroke-width: 25px; }
.casing.huge { stroke-width: 36px; }
.road.huge { stroke-width: 34px; }
.foot { fill: none; stroke: #fa8f85; stroke-width: 3px; stroke-dasharray: 4 5; }
.steps { fill: none; stroke: #fa8f85; stroke-width: 6px; stroke-dasharray: 3 2; }
.map-canvas text { font-family: "Noto Sans", sans-serif; text-anchor: middle; paint-order: stroke; stroke-linejoin: round; }
.p-mark text { font-size: 32px; font-weight: 600; fill: #168fd2; }
.stop text { font-size: 20px; fill: #3d7ff0; stroke: #fff; stroke-width: 2px; stroke-opacity: .7; }
.house text { font-size: 19px; fill: #666; stroke: #ddd; stroke-width: 2px; }
.place text { font-size: 22px; fill: #666; stroke: #fff; stroke-width: 2px; stroke-opacity: .7; }
.street text { font-size: 22px; fill: #222; stroke: #fff; stroke-width: 3px; text-anchor: start; }

.range { fill: rgba(0, 0, 0, .14); stroke: rgba(0, 0, 0, .45); stroke-width: 4; stroke-dasharray: 16 10; }
.link { fill: none; stroke: #8e6cc0; stroke-opacity: .7; stroke-width: 4; stroke-dasharray: 12 8; }
.ring-outer { fill: rgba(50, 132, 255, .12); stroke: #7faefa; stroke-width: 4; }
.ring-inner { fill: none; stroke: #3a82f5; stroke-width: 2; }
.marker circle { stroke: #fff; stroke-width: 4; }
.gateway circle { fill: #ff9800; }
.beacon circle { fill: #3388ff; }

.pin {
  position: absolute;
  width: 402px;
  padding: 13px 38px 17px 20px;
  border-left: 4px solid #0054e9;
  border-radius: 16px;
  background: #f4f6fa;
  box-shadow: 0 4px 10px rgba(0, 0, 0, .1);
}
.gateway-pin { border-left-color: #ffc409; }
.pin-head { display: flex; justify-content: space-between; align-items: center; }
.pin h2 { font-size: 28px; line-height: 32px; font-weight: 700; }
.pin-value { font-size: 28px; line-height: 32px; color: #636469; }
.pin .stamp { margin-top: 19px; }
.pin.active { border: 3px solid #0054e9; border-left-width: 8px; }
.pin-dgw44 { left: 207px; top: 854px; }
.pin-mixer { left: 292px; top: 945px; }
.pin-position { left: 348px; top: 1087px; }
.pin-tamping { left: 364px; top: 1255px; }
.pin-shredder { left: 340px; top: 1427px; }
.pin-dgw24 { left: 280px; top: 1562px; }

.controls {
  position: absolute;
  top: 20px;
  right: 20px;
  display: grid;
  gap: 20px;
}
.control {
  border: 4px solid rgba(0, 0, 0, .22);
  border-radius: 8px;
  background: #f4f6fa;
  background-clip: padding-box;
}
.control button { display: grid; place-items: center; width: 60px; height: 60px; }
.control button + button { border-top: 2px solid #c8c8c8; }
.sign { width: 24px; height: 24px; fill: none; stroke: #111; stroke-width: 4; }
.control-icon { width: 36px; height: 36px; color: #000; }

.credit {
  position: absolute;
  right: 0;
  bottom: 0;
  display: flex;
  align-items: center;
  gap: 7px;
  padding: 0 10px;
  background: rgba(255, 255, 255, .8);
  font-size: 24px;
  line-height: 34px;
  color: #333;
}
.credit a { color: #0078a8; text-decoration: none; }
.flag { width: 24px; height: 16px; }

/* Charts */
.charts { background: #f4f6fa; }
.charts-head {
  display: grid;
  grid-template-columns: 1fr auto 1fr;
  align-items: center;
  height: 88px;
  padding: 0 38px 2px 56px;
  border-bottom: 2px solid #c2c2c4;
  background: #f7f7f7;
}
.back {
  display: flex;
  align-items: center;
  gap: 17px;
  font-size: 34px;
  line-height: 40px;
  color: #0054e9;
}
.back-icon { width: 22px; height: 38px; }
.charts-head .title { margin-left: -16px; }
.refresh { justify-self: end; color: #0054e9; }
.refresh-icon { width: 56px; height: 56px; }

.filters { display: grid; gap: 32px; padding: 32px 32px 34px; }
.field {
  display: flex;
  align-items: center;
  height: 89px;
  padding: 0 40px 1px 32px;
  border-radius: 20px;
  background: #fff;
  font-size: 32px;
}
.field label { flex: 1; }
.field select {
  appearance: none;
  border: 0;
  padding: 0;
  background: none;
  font: inherit;
  color: #000;
  text-align: right;
}
.expand { width: 20px; height: 26px; margin-left: 17px; color: #555; }

.toolbar { display: flex; justify-content: flex-end; height: 40px; padding-right: 12px; }
.toolbar button { display: flex; align-items: center; width: 42px; height: 40px; }
.toolbar svg { fill: #6e8192; }
.tool-round { width: 34px; height: 34px; }
.tool { width: 42px; height: 42px; }
.toolbar .pan { margin-right: 6px; }

.plot { position: relative; }
.plot-svg { width: 100%; height: auto; }
.grid path { fill: none; stroke: #e0e0e0; stroke-width: 2; }
.y-labels text { font-size: 22px; fill: #373d3f; text-anchor: end; }
.x-labels text { font-size: 24px; fill: #373d3f; text-anchor: middle; }
.series { fill: none; stroke: #007dfa; stroke-opacity: .72; stroke-width: 10; }
.crosshair { fill: none; stroke: #b6b6b6; stroke-width: 2; stroke-dasharray: 6 6; }
.point { fill: #008ffb; stroke: #fff; stroke-width: 4; }

.tooltip {
  position: absolute;
  left: 483px;
  top: 35px;
  width: 337px;
  border: 2px solid #e3e3e3;
  border-radius: 10px;
  background: rgba(255, 255, 255, .96);
  box-shadow: 4px 4px 12px -4px rgba(0, 0, 0, .3);
  overflow: hidden;
  font-size: 24px;
  line-height: 28px;
}
.tooltip-title { padding: 11px; border-bottom: 2px solid #ddd; background: #eceff1; }
.tooltip-body { display: flex; align-items: center; padding: 20px 23px 18px; }
.tooltip-dot { width: 24px; height: 24px; border-radius: 50%; margin-right: 14px; background: #008ffb; }
.tooltip-body b { margin-left: 18px; }

.x-tooltip {
  position: absolute;
  left: 326px;
  top: 602px;
  width: 265px;
  padding: 18px 0 17px;
  border: 2px solid #90a4ae;
  border-radius: 4px;
  background: #eceff1;
  font-size: 24px;
  line-height: 28px;
  text-align: center;
  color: #373d3f;
}
.x-tooltip::before {
  content: "";
  position: absolute;
  left: 50%;
  top: -10px;
  width: 16px;
  height: 16px;
  margin-left: -9px;
  border: 2px solid #90a4ae;
  border-right: 0;
  border-bottom: 0;
  background: linear-gradient(135deg, #eceff1 55%, transparent 55%);
  transform: rotate(45deg);
}
```

FILE: chart.js
```js
// One reading every ten minutes, starting at 15:40.
const readings = [
  -53, -69, -55, -68, -51, -69, -71, -68, -63, -69, -60, -68, -57, -52, -68, -75, -66, -60, -66, -70,
  -65, -61, -64, -61, -61, -63, -64, -65, -64, -58, -67, -65, -70, -70, -75, -64, -69, -70, -68, -53,
  -61, -70, -55, -46, -65, -63, -65, -65, -65, -52, -63, -63, -65, -65, -65, -58, -58, -75, -56, -77,
  -76, -75, -70, -66, -75, -51, -58, -71, -68, -90, -62, -65, -69, -66, -65, -66, -74, -77, -68, -64,
  -62, -63, -62, -65, -58, -68, -68, -75, -58, -54, -57, -62, -63, -54, -67, -65, -77, -65, -61, -63,
  -66, -65, -54, -53, -73, -72, -66, -56, -74, -65, -64, -60, -64, -58, -63, -64, -62, -62, -60, -69,
  -65, -62, -78, -70, -67, -74, -66, -64, -65, -51, -67, -61, -52, -54, -61, -62, -74, -69, -50, -53,
  -65, -61, -69, -66, -90
];
const STEP = 8;
const FIRST_X = 116;
const x = i => FIRST_X + i * STEP;
const y = v => 18 + (-40 - v) * 11.6;

let d = `M${x(0)} ${y(readings[0])}`;
for (let i = 1; i < readings.length; i++) {
  const bend = STEP * 0.35;
  const y0 = y(readings[i - 1]);
  const y1 = y(readings[i]);
  d += `C${x(i - 1) + bend} ${y0} ${x(i) - bend} ${y1} ${x(i)} ${y1}`;
}
document.getElementById("series").setAttribute("d", d);

let ticks = "";
for (let i = 0; i < 12; i++) ticks += `M${132 + i * 96} 598v12`;
document.getElementById("ticks").setAttribute("d", ticks);
```
